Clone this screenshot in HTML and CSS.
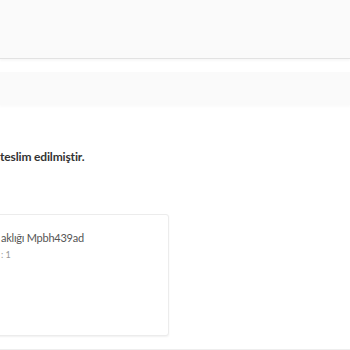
FILE: index.html
```html
<!DOCTYPE html>
<html>
<head>
<meta charset="utf-8">
<link rel="stylesheet" href="styles.css">
</head>
<body>
<div class="page">
  <div class="topbar"></div>
  <div class="gap"></div>
  <div class="band"></div>
  <div class="notice"><span class="msg">teslim edilmiştir.</span></div>
  <div class="cardrow">
    <div class="card">
      <div class="title">aklığı Mpbh439ad</div>
      <div class="sub">: 1</div>
    </div>
  </div>
  <div class="footer"></div>
</div>
</body>
</html>
```
FILE: styles.css
```css
html, body {
  margin: 0;
  padding: 0;
  background: #ffffff;
  font-family: "Lato", "Open Sans", sans-serif;
}
.page {
  width: 350px;
  height: 350px;
  overflow: hidden;
}
.topbar {
  height: 58px;
  background: #fafafa;
  border-bottom: 1px solid #e2e2e2;
  box-shadow: 0 2px 2px rgba(0,0,0,0.03);
}
.gap {
  height: 13px;
}
.band {
  height: 33px;
  background: #fafafa;
  box-shadow: 0 2px 2px rgba(0,0,0,0.02);
}
.notice {
  padding-top: 40px;
  height: 69px;
  box-sizing: content-box;
}
.msg {
  font-size: 12px;
  font-weight: 700;
  color: #333;
  letter-spacing: -0.15px;
}
.cardrow {
  height: 135px;
}
.card {
  margin-left: -20px;
  width: 189px;
  height: 122px;
  background: #fff;
  border: 1px solid #ececec;
  border-radius: 3px;
  box-shadow: 0 1px 2px rgba(0,0,0,0.06);
  box-sizing: border-box;
  padding: 16px 0 0 20px;
}
.title {
  font-size: 11px;
  color: #555;
  line-height: 14px;
  letter-spacing: -0.25px;
}
.sub {
  margin-top: 4px;
  font-size: 9px;
  color: #999;
  line-height: 12px;
}
.footer {
  border-top: 1px solid #eeeeee;
}
```
